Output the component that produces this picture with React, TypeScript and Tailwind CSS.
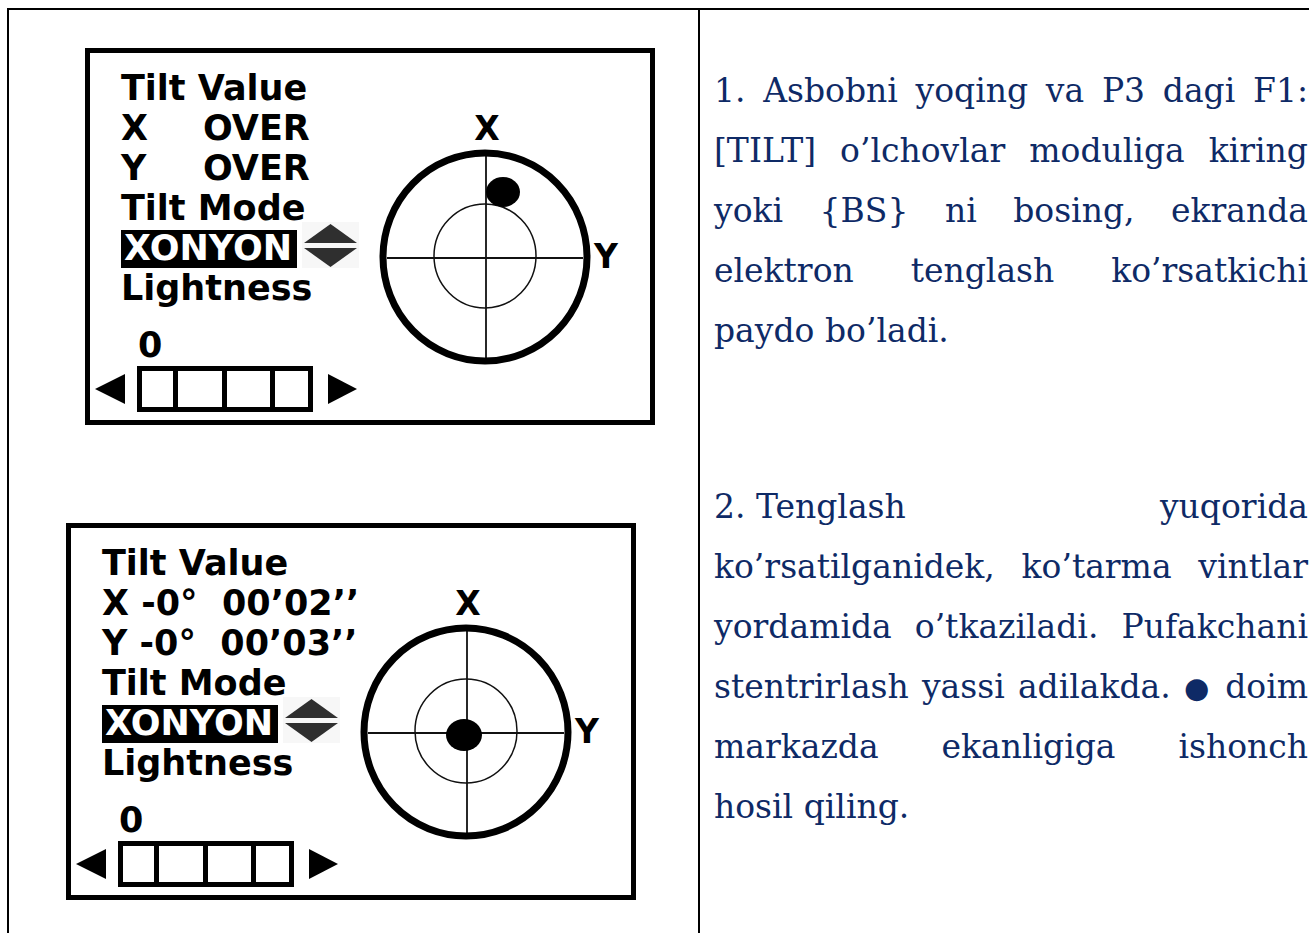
import type { ReactNode } from "react";

type Dot = { cx: number; cy: number; rx: number; ry: number };

function Arrows() {
  return (
    <svg width="57" height="46" viewBox="0 0 57 46" className="ml-[5px] shrink-0">
      <rect x="0" y="0" width="57" height="46" fill="#f7f7f7" />
      <polygon points="28.5,2 55,21 2,21" fill="#2f2f2f" />
      <polygon points="2,26 55,26 28.5,45" fill="#2f2f2f" />
    </svg>
  );
}

function Level({ dot }: { dot: Dot }) {
  return (
    <svg width="255" height="270" viewBox="0 0 255 270" className="mt-[55px] shrink-0">
      <text
        x="112"
        y="32"
        textAnchor="middle"
        fontFamily="DejaVu Sans, sans-serif"
        fontWeight="bold"
        fontSize="33"
      >
        X
      </text>
      <text x="219" y="160" fontFamily="DejaVu Sans, sans-serif" fontWeight="bold" fontSize="33">
        Y
      </text>
      <line x1="111" y1="44" x2="111" y2="254" stroke="#111" strokeWidth="1.8" />
      <line x1="12" y1="150" x2="208" y2="150" stroke="#111" strokeWidth="1.8" />
      <ellipse cx="110" cy="148" rx="51" ry="52" fill="none" stroke="#111" strokeWidth="1.5" />
      <ellipse cx="110" cy="149" rx="102" ry="104" fill="none" stroke="#000" strokeWidth="7" />
      <ellipse cx={dot.cx} cy={dot.cy} rx={dot.rx} ry={dot.ry} fill="#000" />
    </svg>
  );
}

function Screen({ xLine, yLine, dot }: { xLine: ReactNode; yLine: ReactNode; dot: Dot }) {
  return (
    <div className="flex h-[377px] w-[570px] border-[5px] border-black bg-white">
      <div className="w-[285px] shrink-0 pl-[31px] pt-[15px] font-['DejaVu_Sans',sans-serif] text-[35px] leading-[40px] font-bold text-black">
        <div>Tilt Value</div>
        <div className="whitespace-pre">{xLine}</div>
        <div className="whitespace-pre">{yLine}</div>
        <div>Tilt Mode</div>
        <div className="flex h-[40px] items-end">
          <span className="h-[38px] bg-black pl-[3px] pr-[5px] leading-[36px] text-white">XONYON</span>
          <Arrows />
        </div>
        <div>Lightness</div>
        <div className="mt-[17px] pl-[17px]">0</div>
        <div className="-ml-[26px] mt-[1px] flex items-center">
          <svg width="30" height="30" viewBox="0 0 30 30">
            <polygon points="0,15 30,0 30,30" fill="#000" />
          </svg>
          <div className="ml-[12px] flex h-[46px] w-[176px] border-[5px] border-black">
            <div className="w-[31px]" />
            <div className="w-[49px] border-l-[5px] border-black" />
            <div className="w-[48px] border-l-[5px] border-black" />
            <div className="w-[38px] border-l-[5px] border-black" />
          </div>
          <svg width="29" height="30" viewBox="0 0 29 30" className="ml-[15px]">
            <polygon points="0,0 29,15 0,30" fill="#000" />
          </svg>
        </div>
      </div>
      <Level dot={dot} />
    </div>
  );
}

function Line({ children, last }: { children: ReactNode; last?: boolean }) {
  return (
    <div className={last ? "text-left" : "text-justify [text-align-last:justify]"}>{children}</div>
  );
}

export default function App() {
  return (
    <div className="h-[933px] w-[1309px] overflow-hidden bg-white">
      <div className="ml-[7px] mt-[8px] flex min-h-[940px] w-[1302px] border-l-2 border-t-2 border-black">
        <div className="w-[691px] shrink-0 border-r-2 border-black pt-[38px]">
          <div className="ml-[76px]">
            <Screen
              xLine={
                <>
                  <span className="inline-block w-[82px]">X</span>OVER
                </>
              }
              yLine={
                <>
                  <span className="inline-block w-[82px]">Y</span>OVER
                </>
              }
              dot={{ cx: 128, cy: 84, rx: 17, ry: 15 }}
            />
          </div>
          <div className="ml-[57px] mt-[98px]">
            <Screen
              xLine="X -0°  00’02’’"
              yLine="Y -0°  00’03’’"
              dot={{ cx: 108, cy: 152, rx: 18, ry: 16 }}
            />
          </div>
        </div>
        <div className="w-[609px] pl-[14px] pr-[1px] pt-[51px] font-['DejaVu_Serif',serif] text-[33px] leading-[60px] text-[#0e2a66]">
          <div>
            <Line>1. Asbobni yoqing va P3 dagi F1:</Line>
            <Line>[TILT] o’lchovlar moduliga kiring</Line>
            <Line>yoki {"{BS}"} ni bosing, ekranda</Line>
            <Line>elektron tenglash ko’rsatkichi</Line>
            <Line last>paydo bo’ladi.</Line>
          </div>
          <div className="mt-[116px]">
            <Line>
              <span className="inline-block">2. Tenglash</span> yuqorida
            </Line>
            <Line>ko’rsatilganidek, ko’tarma vintlar</Line>
            <Line>yordamida o’tkaziladi. Pufakchani</Line>
            <Line>
              stentrirlash yassi adilakda. <span className="text-[29px] leading-none">●</span> doim
            </Line>
            <Line>markazda ekanligiga ishonch</Line>
            <Line last>hosil qiling.</Line>
          </div>
        </div>
      </div>
    </div>
  );
}
